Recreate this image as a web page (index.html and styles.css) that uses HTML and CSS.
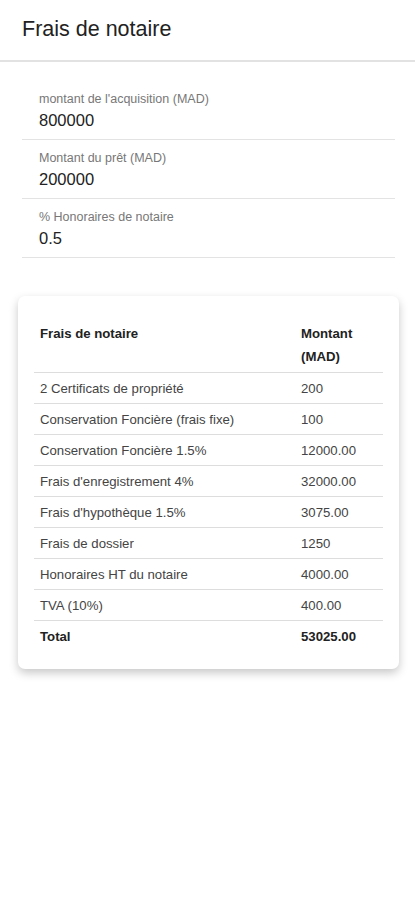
FILE: index.html
```html
<!DOCTYPE html>
<html lang="fr">
<head>
<meta charset="utf-8">
<title>Frais de notaire</title>
<link rel="stylesheet" href="styles.css">
</head>
<body>
<header class="topbar">
  <h1 class="title">Frais de notaire</h1>
</header>
<main class="content">
  <section class="form">
    <div class="field">
      <label class="field-label">montant de l'acquisition (MAD)</label>
      <div class="field-value">800000</div>
    </div>
    <div class="field">
      <label class="field-label">Montant du prêt (MAD)</label>
      <div class="field-value">200000</div>
    </div>
    <div class="field">
      <label class="field-label">% Honoraires de notaire</label>
      <div class="field-value">0.5</div>
    </div>
  </section>
  <section class="card">
    <table class="fees">
      <thead>
        <tr><th class="col-name">Frais de notaire</th><th class="col-amount">Montant (MAD)</th></tr>
      </thead>
      <tbody>
        <tr><td>2 Certificats de propriété</td><td>200</td></tr>
        <tr><td>Conservation Foncière (frais fixe)</td><td>100</td></tr>
        <tr><td>Conservation Foncière 1.5%</td><td>12000.00</td></tr>
        <tr><td>Frais d'enregistrement 4%</td><td>32000.00</td></tr>
        <tr><td>Frais d'hypothèque 1.5%</td><td>3075.00</td></tr>
        <tr><td>Frais de dossier</td><td>1250</td></tr>
        <tr><td>Honoraires HT du notaire</td><td>4000.00</td></tr>
        <tr><td>TVA (10%)</td><td>400.00</td></tr>
        <tr class="total"><td>Total</td><td>53025.00</td></tr>
      </tbody>
    </table>
  </section>
</main>
</body>
</html>
```

FILE: styles.css
```css
* { box-sizing: border-box; }
html, body { margin: 0; padding: 0; background: #fff; }
body { font-family: "Liberation Sans", Arial, sans-serif; color: #222; }

.topbar {
  height: 62px;
  border-bottom: 2px solid #e2e2e2;
  display: flex;
  align-items: center;
  padding: 0 22px;
}
.title {
  margin: 0;
  font-size: 21.5px;
  font-weight: normal;
  color: #222;
  padding-bottom: 2px;
}

.content { padding: 19px 0 40px; }

.form {
  margin: 0 20px 0 22px;
}
.field {
  padding: 10px 0 8px 17px;
  border-bottom: 1px solid #e3e3e3;
}
.field-label {
  display: block;
  font-size: 12.5px;
  line-height: 16px;
  color: #777;
}
.field-value {
  margin-top: 2px;
  font-size: 16.5px;
  line-height: 22px;
  color: #222;
}

.card {
  margin: 38px 16px 0 18px;
  padding: 16px 16px 18px;
  border-radius: 7px;
  box-shadow: 0 4px 10px rgba(0,0,0,0.22);
  background: #fff;
}
.fees {
  width: 100%;
  border-collapse: collapse;
  font-size: 13.2px;
  color: #444;
}
.fees th {
  text-align: left;
  vertical-align: top;
  font-weight: bold;
  color: #222;
  line-height: 23px;
  padding: 10px 6px 4px;
  border-bottom: 1px solid #ddd;
}
.fees .col-amount { width: 88px; }
.fees td {
  padding: 8px 6px 7px;
  line-height: 15px;
  border-bottom: 1px solid #ddd;
}
.fees tr.total td {
  font-weight: bold;
  color: #222;
  border-bottom: none;
}
```
